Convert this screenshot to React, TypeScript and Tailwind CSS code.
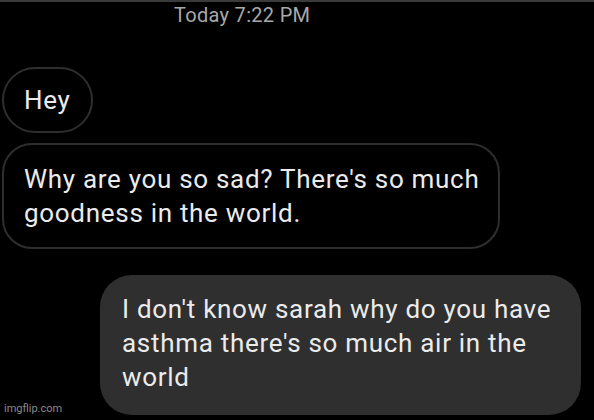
export default function App() {
  return (
    <div
      className="relative h-[420px] w-[594px] overflow-hidden border-t-2 border-[#3a3a3a] bg-black text-[#ebebeb]"
      style={{ fontFamily: "Roboto, 'Noto Sans', sans-serif" }}
    >
      <div className="pl-[174px] pt-[1px] text-[20px] leading-[24px] tracking-[0.3px] text-[#a8a8a8]">Today 7:22 PM</div>

      <div className="mt-[40px] flex flex-col items-start gap-[10px] pl-[2px]">
        <div className="flex h-[66px] items-center rounded-full border-2 border-[#2e2e2e] px-[20px] text-[26px] leading-[34px] tracking-[0.7px]">
          Hey
        </div>
        <div className="w-[498px] rounded-[30px] border-2 border-[#2e2e2e] py-[17px] pl-[20px] pr-[16px] text-[26px] leading-[34px] tracking-[0.7px]">
          Why are you so sad? There's so much goodness in the world.
        </div>
      </div>

      <div className="mt-[26px] flex pl-[100px]">
        <div className="h-[140px] w-[481px] rounded-[32px] bg-[#2f2f2f] pt-[17px] pl-[22px] pr-[20px] text-[26px] leading-[34px] tracking-[0.7px]">
          I don't know sarah why do you have asthma there's so much air in the world
        </div>
      </div>

      <div className="absolute bottom-[3px] left-[4px] text-[11px] text-[#8a8a8a]">imgflip.com</div>
    </div>
  );
}
